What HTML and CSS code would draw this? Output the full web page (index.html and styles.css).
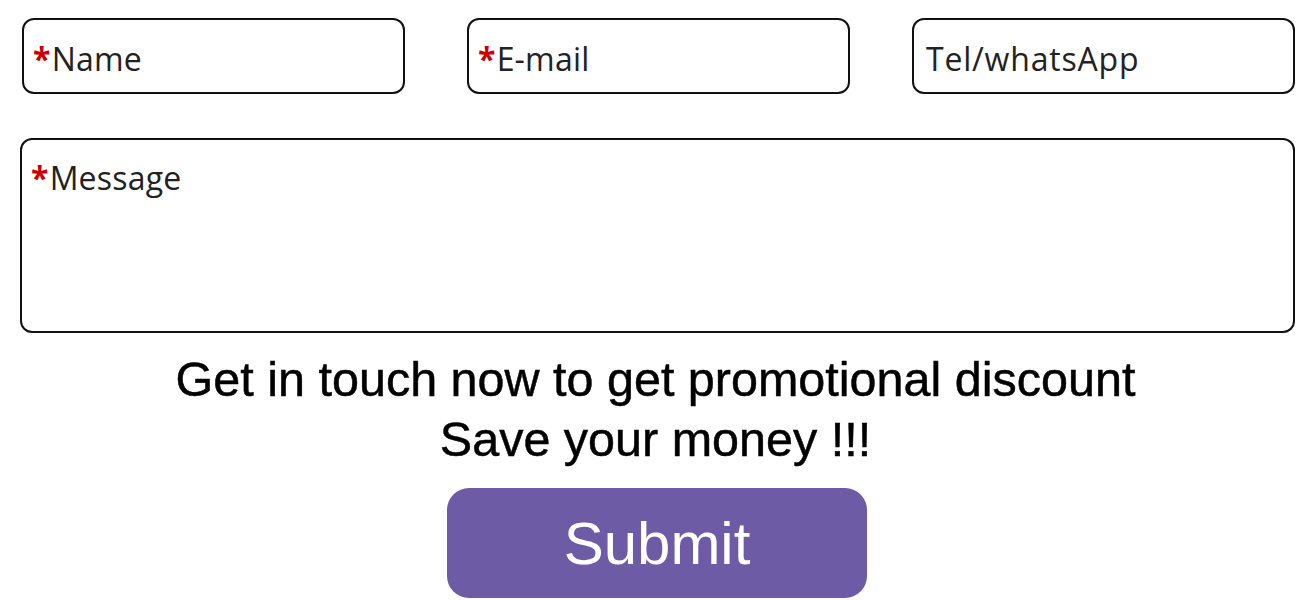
FILE: index.html
```html
<!DOCTYPE html>
<html>
<head>
<meta charset="utf-8">
<link rel="stylesheet" href="styles.css">
</head>
<body>
<form class="form">
  <div class="row">
    <div class="field"><span class="star">*</span>Name</div>
    <div class="field"><span class="star">*</span>E-mail</div>
    <div class="field field-plain">Tel/whatsApp</div>
  </div>
  <div class="message"><span class="star">*</span>Message</div>
  <p class="promo">Get in touch now to get promotional discount<br>Save your money !!!</p>
  <div class="actions"><button type="button" class="submit">Submit</button></div>
</form>
</body>
</html>
```
FILE: styles.css
```css
html, body { margin: 0; padding: 0; background: #fff; }
.form { padding: 18px 19px 0 20px; }
.row { display: flex; justify-content: space-between; padding: 0 0 0 2px; }
.field, .message {
  box-sizing: border-box;
  border: 2px solid #111;
  border-radius: 12px;
  font-family: "Open Sans", sans-serif;
  font-size: 32px;
  font-weight: 500;
  color: #222;
  padding-left: 9px;
  letter-spacing: 0.2px;
}
.field { width: 383px; height: 76px; line-height: 77px; }
.field-plain { padding-left: 12px; letter-spacing: 0.8px; }
.message { margin-top: 44px; height: 195px; line-height: 1; padding-top: 22px; }
.star { color: #c00; font-weight: bold; margin-right: 1px; }
.promo {
  margin: 16px 0 0;
  padding-right: 4px;
  text-align: center;
  font-family: "Liberation Sans", Arial, sans-serif;
  font-size: 48.5px;
  line-height: 60px;
  color: #000;
  -webkit-text-stroke: 0.5px #000;
}
.actions { display: flex; justify-content: center; margin-top: 19px; padding-right: 1px; }
.submit {
  width: 420px; height: 110px;
  border: none; border-radius: 22px;
  background: #6e5ba6; color: #fff;
  font-family: "Liberation Sans", Arial, sans-serif;
  font-size: 60px;
}
```
